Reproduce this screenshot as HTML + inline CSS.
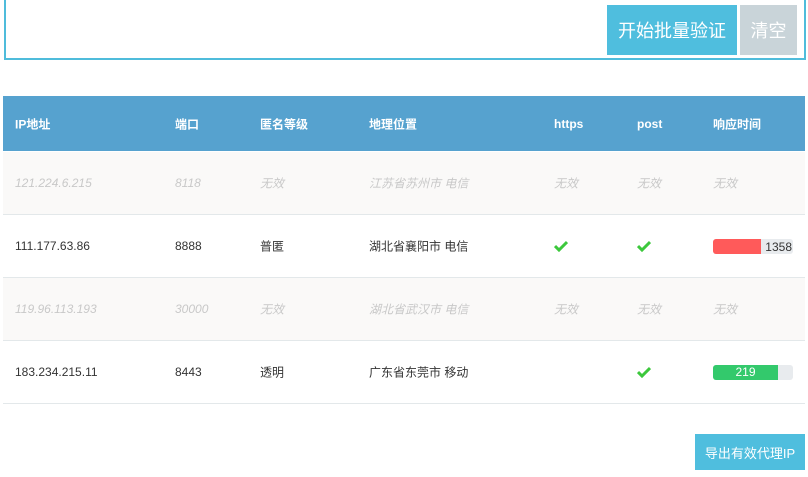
<!DOCTYPE html>
<html><head><meta charset="utf-8"><style>
*{margin:0;padding:0;box-sizing:border-box}
body{width:808px;height:477px;background:#fff;font-family:"Liberation Sans","Noto Sans CJK SC",sans-serif;position:relative;overflow:hidden;font-size:12px;color:#333}
.box{position:absolute;left:4px;top:-4px;width:802px;height:64px;border:2px solid #4fbcdb}
.btn{position:absolute;color:#fff;font-size:18px;display:flex;align-items:center;justify-content:center}
.hdr{position:absolute;left:3px;top:96px;width:802px;height:55px;background:#56a2cf;color:#fff;font-weight:bold;font-size:12px}
.row{position:absolute;left:3px;width:802px;height:63px;border-bottom:1px solid #e3e8ea}
.c{position:absolute;top:50%;transform:translateY(-50%);white-space:nowrap}
.dead{background:#faf9f8;color:#c8c8c8;font-style:italic}
.bar{position:absolute;left:710px;top:24px;width:80px;height:15px;background:#e8ebee;border-radius:3px;overflow:hidden}
.chk{position:absolute;top:50%;transform:translateY(-50%)}
</style></head><body>
<div class="box"></div>
<div class="btn" style="left:607px;top:5px;width:130px;height:50px;background:#4fbede">开始批量验证</div>
<div class="btn" style="left:740px;top:5px;width:57px;height:50px;background:#c9d4d9">清空</div>
<div class="hdr">
<span class="c" style="left:12px">IP地址</span><span class="c" style="left:172px">端口</span><span class="c" style="left:257px">匿名等级</span><span class="c" style="left:366px">地理位置</span><span class="c" style="left:551px">https</span><span class="c" style="left:634px">post</span><span class="c" style="left:710px">响应时间</span>
</div>
<div class="row dead" style="top:152px">
<span class="c" style="left:12px">121.224.6.215</span><span class="c" style="left:172px">8118</span><span class="c" style="left:257px">无效</span><span class="c" style="left:366px">江苏省苏州市 电信</span><span class="c" style="left:551px">无效</span><span class="c" style="left:634px">无效</span><span class="c" style="left:710px">无效</span>
</div>
<div class="row" style="top:215px">
<span class="c" style="left:12px">111.177.63.86</span><span class="c" style="left:172px">8888</span><span class="c" style="left:257px">普匿</span><span class="c" style="left:366px">湖北省襄阳市 电信</span>
<svg class="chk" style="left:551px" width="14" height="12" viewBox="0 0 14 12"><path d="M1 6l4 4 8-8" stroke="#3cc83c" stroke-width="3" fill="none"/></svg>
<svg class="chk" style="left:634px" width="14" height="12" viewBox="0 0 14 12"><path d="M1 6l4 4 8-8" stroke="#3cc83c" stroke-width="3" fill="none"/></svg>
<div class="bar"><div style="width:48px;height:15px;background:#ff5a5a"></div><span style="position:absolute;right:1px;top:1px;font-size:12px;color:#333">1358</span></div>
</div>
<div class="row dead" style="top:278px">
<span class="c" style="left:12px">119.96.113.193</span><span class="c" style="left:172px">30000</span><span class="c" style="left:257px">无效</span><span class="c" style="left:366px">湖北省武汉市 电信</span><span class="c" style="left:551px">无效</span><span class="c" style="left:634px">无效</span><span class="c" style="left:710px">无效</span>
</div>
<div class="row" style="top:341px">
<span class="c" style="left:12px">183.234.215.11</span><span class="c" style="left:172px">8443</span><span class="c" style="left:257px">透明</span><span class="c" style="left:366px">广东省东莞市 移动</span>
<svg class="chk" style="left:634px" width="14" height="12" viewBox="0 0 14 12"><path d="M1 6l4 4 8-8" stroke="#3cc83c" stroke-width="3" fill="none"/></svg>
<div class="bar"><div style="width:65px;height:15px;background:#33c96c;color:#fff;text-align:center;font-size:12px;line-height:15px">219</div></div>
</div>
<div class="btn" style="left:695px;top:434px;width:110px;height:36px;background:#4fbede;font-size:13px">导出有效代理IP</div>
</body></html>
